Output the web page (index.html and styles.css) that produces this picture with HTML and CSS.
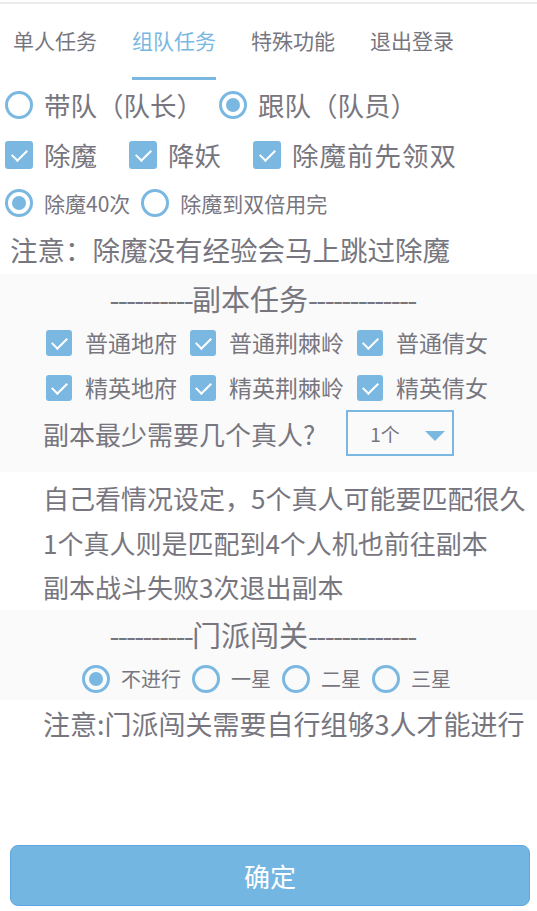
FILE: index.html
```html
<!DOCTYPE html>
<html lang="zh-CN">
<head>
    <meta charset="UTF-8">
    <meta name="viewport" content="width=device-width, initial-scale=1.0">
    <title>组队任务</title>
    <link rel="stylesheet" href="styles.css">
</head>
<body>
    <div class="tabs">
        <div class="tab">单人任务</div>
        <div class="tab active">组队任务</div>
        <div class="tab">特殊功能</div>
        <div class="tab">退出登录</div>
    </div>

    <div class="row big">
        <label class="opt"><span class="radio"></span>带队（队长）</label>
        <label class="opt"><span class="radio on"></span>跟队（队员）</label>
    </div>
    <div class="row big checks">
        <label class="opt"><span class="check"></span>除魔</label>
        <label class="opt"><span class="check"></span>降妖</label>
        <label class="opt"><span class="check"></span>除魔前先领双</label>
    </div>
    <div class="row small">
        <label class="opt"><span class="radio on"></span>除魔40次</label>
        <label class="opt"><span class="radio"></span>除魔到双倍用完</label>
    </div>
    <div class="note first">注意：除魔没有经验会马上跳过除魔</div>

    <div class="section dungeon">
        <div class="section-title"><span class="dash">----------</span>副本任务<span class="dash">-------------</span></div>
        <div class="grid">
            <label class="opt"><span class="check sm"></span>普通地府</label>
            <label class="opt"><span class="check sm"></span>普通荆棘岭</label>
            <label class="opt"><span class="check sm"></span>普通倩女</label>
            <label class="opt"><span class="check sm"></span>精英地府</label>
            <label class="opt"><span class="check sm"></span>精英荆棘岭</label>
            <label class="opt"><span class="check sm"></span>精英倩女</label>
        </div>
        <div class="need">
            <span>副本最少需要几个真人?</span>
            <div class="select">1个<span class="caret"></span></div>
        </div>
    </div>

    <div class="tips">
        <p>自己看情况设定，5个真人可能要匹配很久</p>
        <p>1个真人则是匹配到4个人机也前往副本</p>
        <p>副本战斗失败3次退出副本</p>
    </div>

    <div class="section sect">
        <div class="section-title"><span class="dash">----------</span>门派闯关<span class="dash">-------------</span></div>
        <div class="stars">
            <label class="opt"><span class="radio on"></span>不进行</label>
            <label class="opt"><span class="radio"></span>一星</label>
            <label class="opt"><span class="radio"></span>二星</label>
            <label class="opt"><span class="radio"></span>三星</label>
        </div>
    </div>
    <div class="tips last">
        <p>注意:门派闯关需要自行组够3人才能进行</p>
    </div>

    <div class="footer">
        <button class="ok">确定</button>
    </div>
</body>
</html>
```

FILE: styles.css
```css
* {
    box-sizing: border-box;
}

body {
    margin: 0;
    width: 537px;
    height: 911px;
    display: flex;
    flex-direction: column;
    background: #fff;
    color: #77767f;
    font-family: "Noto Sans CJK SC", "Noto Sans", sans-serif;
    overflow: hidden;
}

/* top tab bar */
.tabs {
    display: flex;
    height: 78px;
    margin-top: 2px;
    border-top: 2px solid #ececec;
    padding-left: 13px;
    gap: 35px;
}

.tab {
    font-size: 21px;
    line-height: 1;
    padding-top: 26px;
    height: 76px;
    border-bottom: 3px solid transparent;
}

.tab.active {
    color: #7ab8e2;
    border-bottom-color: #7ab8e2;
}

/* option rows */
.row {
    display: flex;
    align-items: center;
    padding-left: 5px;
}

.row.big {
    height: 50px;
    font-size: 26.5px;
    gap: 16px;
}

.row.big.checks {
    gap: 32px;
}

.row.big.checks .opt:last-child {
    letter-spacing: 1px;
}

.row.small {
    height: 46px;
    font-size: 21px;
    gap: 11px;
}

.opt {
    display: flex;
    align-items: center;
    gap: 11px;
    line-height: 1;
    white-space: nowrap;
}

.radio {
    width: 28px;
    height: 28px;
    border: 3px solid #7ab8e2;
    border-radius: 50%;
    display: flex;
    align-items: center;
    justify-content: center;
    flex: none;
}

.radio.on::after {
    content: "";
    width: 14px;
    height: 14px;
    border-radius: 50%;
    background: #7ab8e2;
}

.check {
    width: 28px;
    height: 28px;
    border-radius: 3px;
    background: #7ab8e2;
    position: relative;
    flex: none;
}

.check::after {
    content: "";
    position: absolute;
    left: 10px;
    top: 5px;
    width: 7px;
    height: 13px;
    border-right: 2px solid #fff;
    border-bottom: 2px solid #fff;
    transform: rotate(45deg);
}

.check.sm {
    width: 26px;
    height: 26px;
}

.check.sm::after {
    left: 9px;
    top: 4px;
}

.note.first {
    height: 48px;
    font-size: 27.5px;
    line-height: 46px;
    padding-left: 10px;
    white-space: nowrap;
}

/* grey blocks */
.section {
    background: #fafafa;
}

.section-title {
    text-align: center;
    font-size: 29px;
    line-height: 48px;
    height: 48px;
    padding-right: 12px;
    white-space: nowrap;
}

.dash {
    letter-spacing: -1.8px;
}

.dungeon {
    height: 198px;
}

.grid {
    display: grid;
    grid-template-columns: 144px 167px auto;
    padding-left: 46px;
    margin-top: -2px;
}

.grid .opt {
    height: 45px;
    font-size: 23px;
    gap: 13px;
}

.need {
    display: flex;
    align-items: center;
    height: 46px;
    padding-left: 43px;
    font-size: 26px;
    gap: 31px;
}

.select {
    width: 108px;
    height: 46px;
    border: 2px solid #7ab8e2;
    display: flex;
    align-items: center;
    padding-left: 22px;
    font-size: 19px;
    position: relative;
}

.caret {
    position: absolute;
    right: 7px;
    top: 19px;
    border-left: 10px solid transparent;
    border-right: 10px solid transparent;
    border-top: 10px solid #7ab8e2;
}

.tips {
    padding: 4px 0 0 43px;
}

.tips p {
    margin: 0;
    font-size: 26px;
    line-height: 44.5px;
    white-space: nowrap;
}

.sect {
    height: 90px;
}

.stars {
    display: flex;
    justify-content: center;
    align-items: center;
    height: 42px;
    gap: 11px;
    font-size: 20px;
    padding-right: 4px;
}

.stars .opt {
    gap: 11px;
}

.tips.last {
    padding-top: 2px;
}

.tips.last p {
    font-size: 27px;
}

/* bottom confirm button */
.footer {
    margin-top: auto;
    padding: 0 7px 5px 10px;
}

.ok {
    width: 100%;
    height: 61px;
    border: 1.5px solid #5ea6e2;
    border-radius: 8px;
    background: #74b6e2;
    color: #fff;
    font-family: inherit;
    font-size: 26px;
}
```
